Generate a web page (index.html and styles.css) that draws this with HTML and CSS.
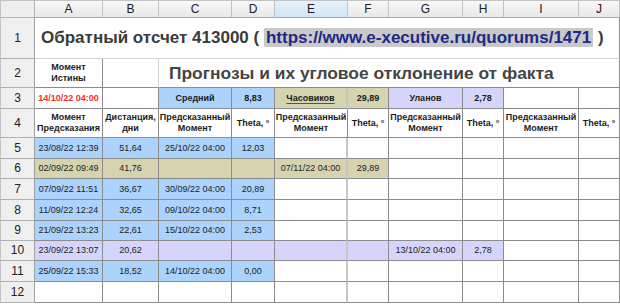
FILE: index.html
```
<!DOCTYPE html>
<html lang="ru">
<head>
<meta charset="utf-8">
<title>Обратный отсчет</title>
<link rel="stylesheet" href="styles.css">
</head>
<body>
<div class="sheet">
  <div class="c corner"></div>
  <div class="c hc">A</div><div class="c hc">B</div><div class="c hc">C</div><div class="c hc">D</div><div class="c hc sel">E</div><div class="c hc">F</div><div class="c hc">G</div><div class="c hc">H</div><div class="c hc">I</div><div class="c hc">J</div>

  <div class="c rh">1</div>
  <div class="c title span10"><span class="ttl">Обратный отсчет 413000 ( <span class="url">https://www.e-xecutive.ru/quorums/1471</span> )</span></div>

  <div class="c rh">2</div>
  <div class="c bold">Момент<br>Истины</div>
  <div class="c lr"></div>
  <div class="c sub span8">Прогнозы и их угловое отклонение от факта</div>

  <div class="c rh">3</div>
  <div class="c bold red">14/10/22 04:00</div>
  <div class="c"></div>
  <div class="c bold b">Средний</div>
  <div class="c bold b">8,83</div>
  <div class="c bold k ef"><span class="spell">Часовиков</span></div>
  <div class="c bold k">29,89</div>
  <div class="c bold l">Уланов</div>
  <div class="c bold l">2,78</div>
  <div class="c"></div>
  <div class="c"></div>

  <div class="c rh">4</div>
  <div class="c bold">Момент<br>Предсказания</div>
  <div class="c bold">Дистанция,<br>дни</div>
  <div class="c bold">Предсказанный<br>Момент</div>
  <div class="c bold">Theta, °</div>
  <div class="c bold">Предсказанный<br>Момент</div>
  <div class="c bold">Theta, °</div>
  <div class="c bold">Предсказанный<br>Момент</div>
  <div class="c bold">Theta, °</div>
  <div class="c bold">Предсказанный<br>Момент</div>
  <div class="c bold">Theta, °</div>

  <div class="c rh">5</div>
  <div class="c b">23/08/22 12:39</div><div class="c b">51,64</div><div class="c b">25/10/22 04:00</div><div class="c b">12,03</div>
  <div class="c ef"></div><div class="c"></div><div class="c"></div><div class="c"></div><div class="c"></div><div class="c"></div>

  <div class="c rh">6</div>
  <div class="c k">02/09/22 09:49</div><div class="c k">41,76</div><div class="c k"></div><div class="c k"></div>
  <div class="c k ef">07/11/22 04:00</div><div class="c k">29,89</div><div class="c"></div><div class="c"></div><div class="c"></div><div class="c"></div>

  <div class="c rh">7</div>
  <div class="c b">07/09/22 11:51</div><div class="c b">36,67</div><div class="c b">30/09/22 04:00</div><div class="c b">20,89</div>
  <div class="c ef"></div><div class="c"></div><div class="c"></div><div class="c"></div><div class="c"></div><div class="c"></div>

  <div class="c rh">8</div>
  <div class="c b">11/09/22 12:24</div><div class="c b">32,65</div><div class="c b">09/10/22 04:00</div><div class="c b">8,71</div>
  <div class="c ef"></div><div class="c"></div><div class="c"></div><div class="c"></div><div class="c"></div><div class="c"></div>

  <div class="c rh">9</div>
  <div class="c b">21/09/22 13:23</div><div class="c b">22,61</div><div class="c b">15/10/22 04:00</div><div class="c b">2,53</div>
  <div class="c ef"></div><div class="c"></div><div class="c"></div><div class="c"></div><div class="c"></div><div class="c"></div>

  <div class="c rh">10</div>
  <div class="c l">23/09/22 13:07</div><div class="c l">20,62</div><div class="c l"></div><div class="c l"></div>
  <div class="c l ef"></div><div class="c l"></div><div class="c l">13/10/22 04:00</div><div class="c l">2,78</div><div class="c"></div><div class="c"></div>

  <div class="c rh">11</div>
  <div class="c b">25/09/22 15:33</div><div class="c b">18,52</div><div class="c b">14/10/22 04:00</div><div class="c b">0,00</div>
  <div class="c ef"></div><div class="c"></div><div class="c"></div><div class="c"></div><div class="c"></div><div class="c"></div>

  <div class="c rh">12</div>
  <div class="c"></div><div class="c"></div><div class="c"></div><div class="c"></div>
  <div class="c ef"></div><div class="c"></div><div class="c"></div><div class="c"></div><div class="c"></div><div class="c"></div>
</div>
</body>
</html>
```

FILE: styles.css
```
html, body {
  margin: 0;
  padding: 0;
  background: #ffffff;
}

.sheet {
  display: grid;
  grid-template-columns: 35px 68px 56px 73px 43px 73px 41px 74px 41px 75px 41px;
  grid-template-rows: 18px 41px 29px 21px 29px 21px 20px 21px 21px 20px 20px 21px 21px;
  width: 620px;
  font-family: "Liberation Sans", Arial, sans-serif;
  font-size: 9px;
  color: #1c1c1c;
}

.c {
  box-sizing: border-box;
  border-right: 1px solid #8c8c8c;
  border-bottom: 1px solid #8c8c8c;
  display: flex;
  align-items: center;
  justify-content: center;
  text-align: center;
  line-height: 11px;
  overflow: hidden;
  white-space: nowrap;
}

.corner {
  background: #eeeeee;
  border-color: #b4b4b4;
  border-left: 1px solid #c4c4c4;
  border-top: 1px solid #c4c4c4;
}

.hc {
  background: linear-gradient(#f8f8f8, #e8e8e8);
  border-right: 1px solid #c2c2c2;
  border-bottom: 1px solid #a8a8a8;
  border-top: 1px solid #c4c4c4;
  font-size: 12px;
  color: #202020;
}

.hc.sel {
  background: linear-gradient(#e6f0fb, #d3e3f6);
}

.rh {
  background: #efefef;
  border-left: 1px solid #c4c4c4;
  border-right: 1px solid #a0a0a0;
  border-bottom: 1px solid #b0b0b0;
  font-size: 12px;
  color: #202020;
}

.title {
  justify-content: flex-start;
  padding-left: 6px;
  border-bottom-color: #d4d4d4;
}

.ttl {
  font-size: 17px;
  line-height: 22px;
  font-weight: bold;
  color: #3b3b3b;
}

.url {
  color: #1c2a86;
  background: #c9c9c9;
  padding: 0 2px;
}

.span10 {
  grid-column: span 10;
}

.span8 {
  grid-column: span 8;
}

.sub {
  justify-content: flex-start;
  padding-left: 10px;
  font-size: 17.4px;
  font-weight: bold;
  color: #444444;
}

.lr {
  border-right-color: #d0d0d0;
}

.bold {
  font-weight: bold;
}

.red {
  color: #ff2a2a;
}

.b {
  background: #abd3fd;
}

.k {
  background: #d6d4b0;
}

.l {
  background: #d5d5fb;
}

.ef {
  border-right: 2px solid #c6c6c6;
}

.spell {
  text-decoration: underline;
  text-decoration-color: #e8121a;
  text-decoration-thickness: 1px;
  text-underline-offset: 2px;
}
```
